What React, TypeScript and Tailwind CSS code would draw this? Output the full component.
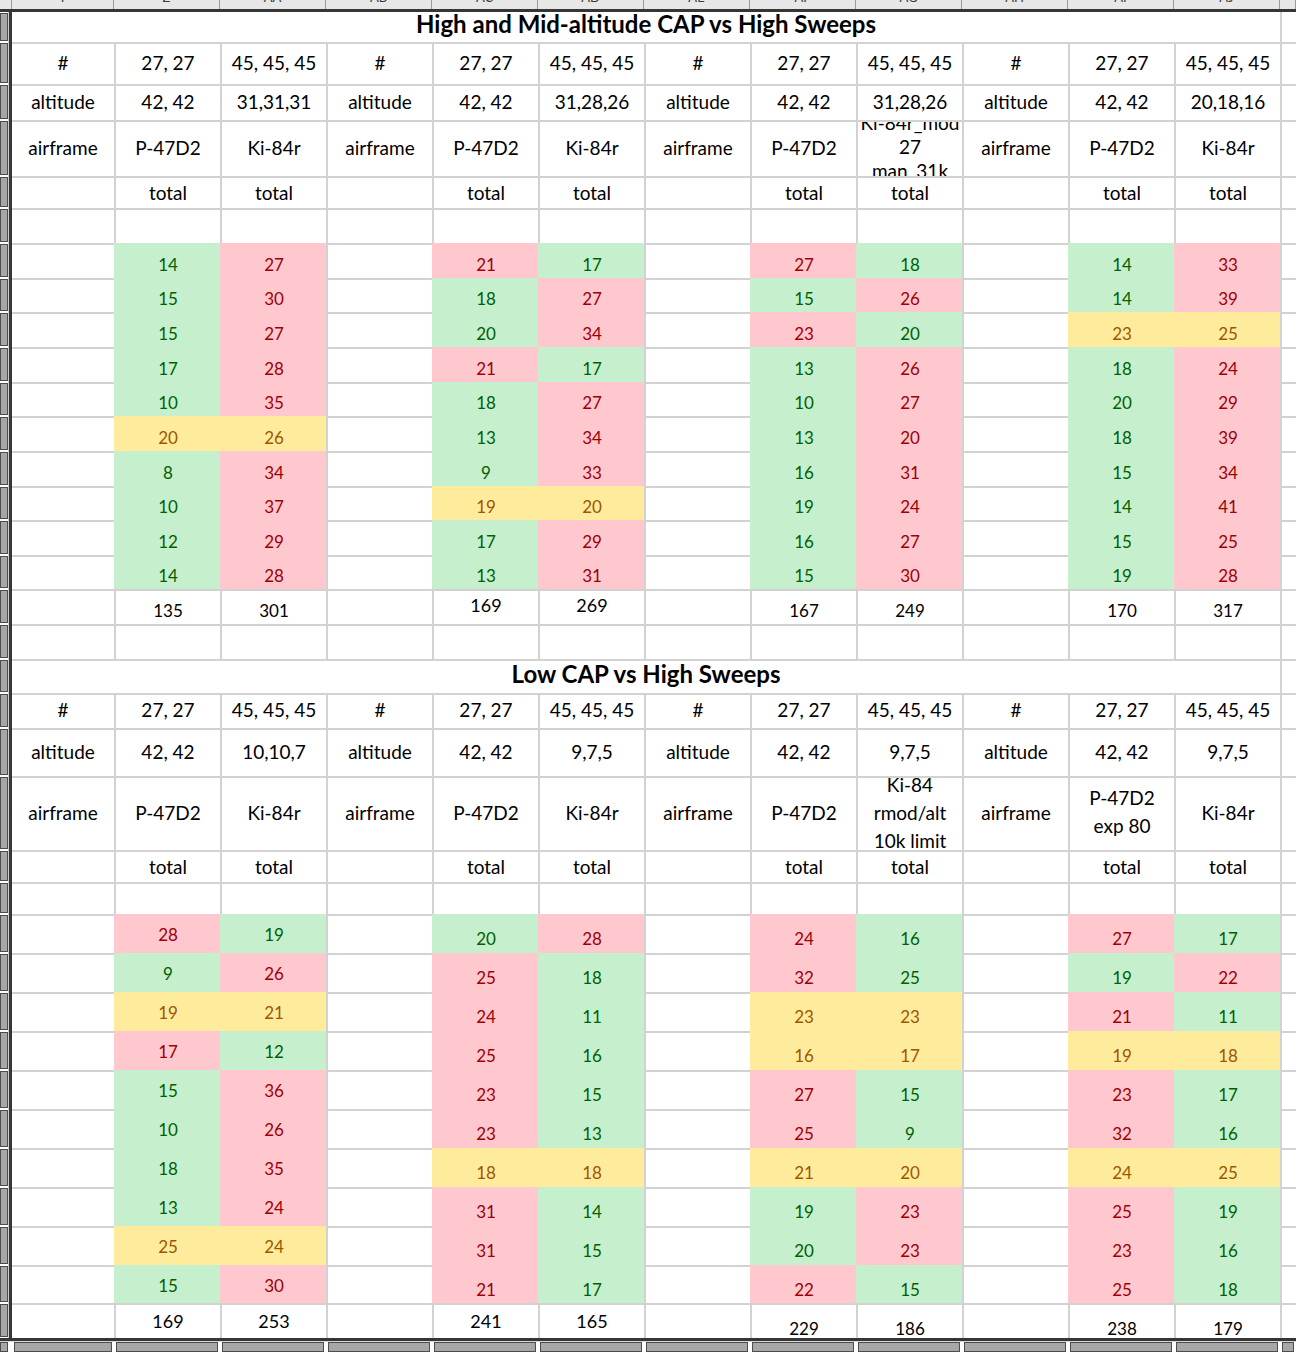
import React from 'react'

type Tone = 'g' | 'r' | 'y'

const TONE: Record<Tone, string> = {
  g: 'bg-[#c6efce] border-[#c6efce] text-[#006100]',
  r: 'bg-[#ffc7ce] border-[#ffc7ce] text-[#9c0006]',
  y: 'bg-[#ffeb9c] border-[#ffeb9c] text-[#9c5700]',
}

const GRID = 'grid grid-cols-[102px_repeat(11,106px)_16px]'

const LETTERS = ['Y', 'Z', 'AA', 'AB', 'AC', 'AD', 'AE', 'AF', 'AG', 'AH', 'AI', 'AJ', '']

// [left, right] per row, value + tone letter
const HIGH: string[][][] = [
  [['14g', '27r'], ['15g', '30r'], ['15g', '27r'], ['17g', '28r'], ['10g', '35r'], ['20y', '26y'], ['8g', '34r'], ['10g', '37r'], ['12g', '29r'], ['14g', '28r']],
  [['21r', '17g'], ['18g', '27r'], ['20g', '34r'], ['21r', '17g'], ['18g', '27r'], ['13g', '34r'], ['9g', '33r'], ['19y', '20y'], ['17g', '29r'], ['13g', '31r']],
  [['27r', '18g'], ['15g', '26r'], ['23r', '20g'], ['13g', '26r'], ['10g', '27r'], ['13g', '20r'], ['16g', '31r'], ['19g', '24r'], ['16g', '27r'], ['15g', '30r']],
  [['14g', '33r'], ['14g', '39r'], ['23y', '25y'], ['18g', '24r'], ['20g', '29r'], ['18g', '39r'], ['15g', '34r'], ['14g', '41r'], ['15g', '25r'], ['19g', '28r']],
]

const LOW: string[][][] = [
  [['28r', '19g'], ['9g', '26r'], ['19y', '21y'], ['17r', '12g'], ['15g', '36r'], ['10g', '26r'], ['18g', '35r'], ['13g', '24r'], ['25y', '24y'], ['15g', '30r']],
  [['20g', '28r'], ['25r', '18g'], ['24r', '11g'], ['25r', '16g'], ['23r', '15g'], ['23r', '13g'], ['18y', '18y'], ['31r', '14g'], ['31r', '15g'], ['21r', '17g']],
  [['24r', '16g'], ['32r', '25g'], ['23y', '23y'], ['16y', '17y'], ['27r', '15g'], ['25r', '9g'], ['21y', '20y'], ['19g', '23r'], ['20g', '23r'], ['22r', '15g']],
  [['27r', '17g'], ['19g', '22r'], ['21r', '11g'], ['19y', '18y'], ['23r', '17g'], ['32r', '16g'], ['24y', '25y'], ['25r', '19g'], ['23r', '16g'], ['25r', '18g']],
]

const HIGH_ROWS = ['h-[35px]', 'h-[34px]', 'h-[35px]', 'h-[35px]', 'h-[34px]', 'h-[35px]', 'h-[35px]', 'h-[34px]', 'h-[35px]', 'h-[34px]']
const LOW_ROWS = ['h-[39px]', 'h-[39px]', 'h-[39px]', 'h-[39px]', 'h-[39px]', 'h-[39px]', 'h-[39px]', 'h-[39px]', 'h-[39px]', 'h-[38px]']

type CellSpec = {
  text?: string
  tone?: Tone
  pad?: string
  size?: string
  lh?: string
}

function Gutter() {
  return (
    <div className="flex w-[12px] shrink-0">
      <div className="w-[8px] my-[1px] bg-[#a7a7a7] border border-[#4d4d4d]" />
      <div className="w-[1px] bg-[#cfcfcf]" />
      <div className="w-[3px] bg-[#363636]" />
    </div>
  )
}

function Cell({ spec, col, top = true }: { spec: CellSpec; col: number; top?: boolean }) {
  const color = spec.tone ? TONE[spec.tone] : 'border-[#d2d2d2] text-black'
  return (
    <div
      className={`flex items-center justify-center overflow-hidden text-center whitespace-pre-line ${top ? 'border-t-2' : ''} ${col === 0 ? '' : 'border-l-2'} ${color} ${spec.pad ?? ''} ${spec.size ?? 'text-[19px]'} ${spec.lh ?? 'leading-none'}`}
    >
      {spec.text}
    </div>
  )
}

function Line({ h, cells }: { h: string; cells: CellSpec[] }) {
  const full = [...cells, {}]
  return (
    <div className={`flex ${h}`}>
      <Gutter />
      <div className={`${GRID} flex-1`}>
        {full.map((c, i) => (
          <Cell key={i} spec={c} col={i} />
        ))}
      </div>
    </div>
  )
}

function TitleLine({ h, title, top }: { h: string; title: string; top: boolean }) {
  return (
    <div className={`flex ${h}`}>
      <Gutter />
      <div className={`${GRID} flex-1`}>
        <div className={`col-span-12 flex items-center justify-center pb-[6px] text-[24px] font-bold text-black leading-none ${top ? 'border-t-2 border-[#d2d2d2]' : ''}`}>
          {title}
        </div>
        <div className={`border-l-2 border-[#d2d2d2] ${top ? 'border-t-2' : ''}`} />
      </div>
    </div>
  )
}

const rep = (trio: (g: number) => CellSpec[]) => [0, 1, 2, 3].flatMap(trio)
const parse = (v: string, pad: string): CellSpec => ({
  text: v.slice(0, -1),
  tone: v.slice(-1) as Tone,
  pad,
  size: 'text-[17px]',
})

function Section({
  altitude,
  airframe,
  data,
  rows,
  dataPad,
  totals,
  heights,
}: {
  altitude: string[]
  airframe: CellSpec[]
  data: string[][][]
  rows: string[]
  dataPad: string[]
  totals: CellSpec[][]
  heights: { hash: string; alt: string; air: string; total: string; empty: string; sum: string }
}) {
  return (
    <>
      <Line h={heights.hash} cells={rep(() => [{ text: '#', pad: 'pb-[4px]' }, { text: '27, 27', pad: 'pb-[4px]' }, { text: '45, 45, 45', pad: 'pb-[4px]' }])} />
      <Line h={heights.alt} cells={rep((g) => [{ text: 'altitude', pad: 'pb-[3px]' }, { text: '42, 42', pad: 'pb-[3px]' }, { text: altitude[g], pad: 'pb-[3px]' }])} />
      <Line h={heights.air} cells={rep((g) => [{ text: 'airframe', pad: 'pb-[4px]' }, airframe[g * 2], airframe[g * 2 + 1]])} />
      <Line h={heights.total} cells={rep(() => [{}, { text: 'total', pad: 'pb-[2px]' }, { text: 'total', pad: 'pb-[2px]' }])} />
      <Line h={heights.empty} cells={rep(() => [{}, {}, {}])} />
      {rows.map((h, i) => (
        <Line
          key={i}
          h={h}
          cells={rep((g) => [{}, parse(data[g][i][0], dataPad[g]), parse(data[g][i][1], dataPad[g])])}
        />
      ))}
      <Line h={heights.sum} cells={rep((g) => [{}, totals[g][0], totals[g][1]])} />
    </>
  )
}

function TopStrip() {
  return (
    <div className="flex flex-col">
      <div className="flex h-[9px] bg-[#e7e7e7]">
        <div className="w-[12px] shrink-0 border-r border-[#9a9a9a]" />
        <div className={`${GRID} flex-1`}>
          {LETTERS.map((l, i) => (
            <div key={i} className="flex justify-center overflow-hidden border-r border-[#9a9a9a]">
              <span className="-mt-[9px] text-[13px] leading-none text-[#3c3c3c]">{l}</span>
            </div>
          ))}
        </div>
      </div>
      <div className="h-[3px] bg-[#363636]" />
    </div>
  )
}

function BottomStrip() {
  return (
    <div className="flex flex-col">
      <div className="h-[3px] bg-[#363636]" />
      <div className="h-[1px] bg-[#d6d6d6]" />
      <div className="flex h-[10px]">
        <div className="w-[12px] shrink-0 pr-[4px]">
          <div className="h-full bg-[#a7a7a7] border border-[#4d4d4d]" />
        </div>
        <div className={`${GRID} flex-1`}>
          {LETTERS.map((_, i) => (
            <div key={i} className="px-[2px]">
              <div className="h-full bg-[#a7a7a7] border border-[#4d4d4d]" />
            </div>
          ))}
        </div>
      </div>
    </div>
  )
}

export default function App() {
  const t = (text: string, pad: string, size = 'text-[17px]'): CellSpec => ({ text, pad, size })
  return (
    <div className="w-[1296px] h-[1352px] overflow-hidden bg-white font-['Lato','Liberation_Sans',sans-serif]">
      <TopStrip />
      <TitleLine h="h-[30px]" title="High and Mid-altitude CAP vs High Sweeps" top={false} />
      <Section
        altitude={['31,31,31', '31,28,26', '31,28,26', '20,18,16']}
        airframe={[
          { text: 'P-47D2', pad: 'pb-[4px]' },
          { text: 'Ki-84r', pad: 'pb-[4px]' },
          { text: 'P-47D2', pad: 'pb-[4px]' },
          { text: 'Ki-84r', pad: 'pb-[4px]' },
          { text: 'P-47D2', pad: 'pb-[4px]' },
          { text: 'Ki-84r_mod\n27\nman_31k', lh: 'leading-[24px]', pad: 'pb-[4px]' },
          { text: 'P-47D2', pad: 'pb-[4px]' },
          { text: 'Ki-84r', pad: 'pb-[4px]' },
        ]}
        data={HIGH}
        rows={HIGH_ROWS}
        dataPad={['pt-[5px]', 'pt-[5px]', 'pt-[5px]', 'pt-[5px]']}
        totals={[
          [t('135', 'pt-[5px]'), t('301', 'pt-[5px]')],
          [t('169', 'pb-[5px]', 'text-[18px]'), t('269', 'pb-[5px]', 'text-[18px]')],
          [t('167', 'pt-[5px]'), t('249', 'pt-[5px]')],
          [t('170', 'pt-[5px]'), t('317', 'pt-[5px]')],
        ]}
        heights={{ hash: 'h-[42px]', alt: 'h-[36px]', air: 'h-[56px]', total: 'h-[32px]', empty: 'h-[35px]', sum: 'h-[35px]' }}
      />
      <Line h="h-[35px]" cells={rep(() => [{}, {}, {}])} />
      <TitleLine h="h-[34px]" title="Low CAP vs High Sweeps" top />
      <Section
        altitude={['10,10,7', '9,7,5', '9,7,5', '9,7,5']}
        airframe={[
          { text: 'P-47D2', pad: 'pb-[4px]' },
          { text: 'Ki-84r', pad: 'pb-[4px]' },
          { text: 'P-47D2', pad: 'pb-[4px]' },
          { text: 'Ki-84r', pad: 'pb-[4px]' },
          { text: 'P-47D2', pad: 'pb-[4px]' },
          { text: 'Ki-84\nrmod/alt\n10k limit', lh: 'leading-[28px]', pad: 'pb-[2px]' },
          { text: 'P-47D2\nexp 80', lh: 'leading-[28px]', pad: 'pb-[4px]' },
          { text: 'Ki-84r', pad: 'pb-[4px]' },
        ]}
        data={LOW}
        rows={LOW_ROWS}
        dataPad={['pt-[0px]', 'pt-[8px]', 'pt-[8px]', 'pt-[8px]']}
        totals={[
          [t('169', 'pb-[2px]', 'text-[18px]'), t('253', 'pb-[2px]', 'text-[18px]')],
          [t('241', 'pb-[2px]', 'text-[18px]'), t('165', 'pb-[2px]', 'text-[18px]')],
          [t('229', 'pt-[13px]'), t('186', 'pt-[13px]')],
          [t('238', 'pt-[13px]'), t('179', 'pt-[13px]')],
        ]}
        heights={{ hash: 'h-[35px]', alt: 'h-[48px]', air: 'h-[74px]', total: 'h-[32px]', empty: 'h-[32px]', sum: 'h-[35px]' }}
      />
      <BottomStrip />
    </div>
  )
}
